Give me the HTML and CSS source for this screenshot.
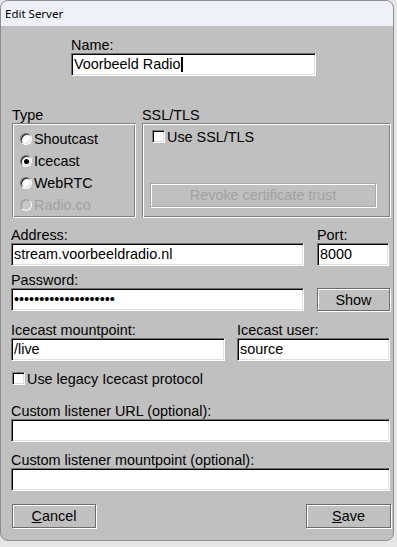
FILE: index.html
```html
<!DOCTYPE html>
<html lang="nl">
<head>
    <meta charset="UTF-8">
    <meta name="viewport" content="width=device-width, initial-scale=1.0">
    <title>Edit Server</title>
    <link rel="stylesheet" href="styles.css">
</head>
<body>
    <div class="window">
        <div class="titlebar">Edit Server</div>

        <div class="content">
            <div class="name-block">
                <div class="label">Name:</div>
                <div class="field">Voorbeeld Radio<span class="caret"></span></div>
            </div>

            <div class="groups">
                <div class="type-col">
                    <div class="label">Type</div>
                    <div class="groupbox type-box">
                        <div class="option"><span class="radio"></span>Shoutcast</div>
                        <div class="option"><span class="radio checked"></span>Icecast</div>
                        <div class="option"><span class="radio"></span>WebRTC</div>
                        <div class="option disabled"><span class="radio"></span>Radio.co</div>
                    </div>
                </div>
                <div class="ssl-col">
                    <div class="label">SSL/TLS</div>
                    <div class="groupbox ssl-box">
                        <div class="option check"><span class="checkbox"></span>Use SSL/TLS</div>
                        <div class="button disabled revoke">Revoke certificate trust</div>
                    </div>
                </div>
            </div>

            <div class="row address-row">
                <div>
                    <div class="label">Address:</div>
                    <div class="field">stream.voorbeeldradio.nl</div>
                </div>
                <div>
                    <div class="label">Port:</div>
                    <div class="field">8000</div>
                </div>
            </div>

            <div class="row password-row">
                <div>
                    <div class="label">Password:</div>
                    <div class="field">••••••••••••••••••••</div>
                </div>
                <div class="button show">Show</div>
            </div>

            <div class="row icecast-row">
                <div>
                    <div class="label">Icecast mountpoint:</div>
                    <div class="field">/live</div>
                </div>
                <div>
                    <div class="label">Icecast user:</div>
                    <div class="field">source</div>
                </div>
            </div>

            <div class="option check legacy"><span class="checkbox"></span>Use legacy Icecast protocol</div>

            <div class="row single url-row">
                <div class="label">Custom listener URL (optional):</div>
                <div class="field"></div>
            </div>

            <div class="row single mount-row">
                <div class="label">Custom listener mountpoint (optional):</div>
                <div class="field"></div>
            </div>

            <div class="footer">
                <div class="button cancel"><span><u>C</u>ancel</span></div>
                <div class="button save"><span><u>S</u>ave</span></div>
            </div>
        </div>
    </div>
</body>
</html>
```

FILE: styles.css
```css
body {
    margin: 0;
    background-color: #e6e6e6;
    font-family: "Liberation Sans", Arial, sans-serif;
    font-size: 14.4px;
    color: #000;
}
.window {
    width: 394px;
    height: 541px;
    box-sizing: border-box;
    border: 1px solid #8e8e8e;
    border-radius: 8px;
    overflow: hidden;
    background-color: #c0c0c0;
}
.titlebar {
    height: 25px;
    line-height: 25px;
    padding-left: 4px;
    background-color: #eef1fa;
    font-family: "Noto Sans", sans-serif;
    font-size: 11.5px;
}
.content {
    padding: 11px 3px 0 10px;
}
.label {
    height: 16px;
    line-height: 16px;
    white-space: nowrap;
}
.field {
    height: 23px;
    line-height: 21px;
    box-sizing: border-box;
    padding-left: 2px;
    background-color: #fff;
    border: 1px solid;
    border-color: #707070 #fff #fff #707070;
    box-shadow: inset 1px 1px 0 #000, inset -1px -1px 0 #e0e0e0;
    white-space: nowrap;
    overflow: hidden;
}
.caret {
    display: inline-block;
    width: 2px;
    height: 15px;
    margin-left: 1px;
    vertical-align: -3px;
    background-color: #000;
}
.name-block {
    width: 245px;
    margin-left: 60px;
}

/* group boxes */
.groups {
    display: flex;
    margin-top: 31px;
}
.type-col {
    width: 124px;
    margin-left: 1px;
}
.ssl-col {
    flex: 1;
    margin-left: 6px;
    margin-right: -1px;
}
.groupbox {
    height: 95px;
    box-sizing: border-box;
    border: 1px solid;
    border-color: #808080 #fff #fff #808080;
    box-shadow: inset 1px 1px 0 #fff, inset -1px -1px 0 #808080;
}
.type-box {
    padding: 4px 0 0 7px;
}
.ssl-box {
    padding: 4px 0 0 8px;
}
.option {
    display: flex;
    align-items: center;
    gap: 2px;
    height: 22px;
    white-space: nowrap;
}
.option.disabled {
    color: #a0a0a0;
}
.option.check {
    height: 17px;
}
.radio {
    position: relative;
    width: 12px;
    height: 12px;
    box-sizing: border-box;
    border-radius: 50%;
    background-color: #fff;
    border: 1px solid;
    border-color: #707070 #fff #fff #707070;
    box-shadow: inset 1px 1px 0 #202020, inset -1px -1px 0 #d8d8d8;
}
.radio.checked::after {
    content: "";
    position: absolute;
    left: 3px;
    top: 3px;
    width: 5px;
    height: 5px;
    border-radius: 50%;
    background-color: #000;
}
.disabled .radio {
    background-color: #c8c8c8;
    border-color: #a0a0a0 #fff #fff #a0a0a0;
    box-shadow: inset 1px 1px 0 #a8a8a8;
}
.checkbox {
    width: 13px;
    height: 13px;
    margin-left: 1px;
    box-sizing: border-box;
    background-color: #fff;
    border: 1px solid;
    border-color: #808080 #fff #fff #808080;
    box-shadow: inset 1px 1px 0 #000, inset -1px -1px 0 #dcdcdc;
}

/* buttons */
.button {
    display: flex;
    align-items: center;
    justify-content: center;
    height: 24px;
    box-sizing: border-box;
    border: 1px solid #6b6b6b;
    box-shadow: inset 1px 1px 0 #fff, 1px 1px 0 #fff;
    white-space: nowrap;
}
.button.disabled {
    color: #a0a0a0;
    border-color: #a8a8a8;
}
.revoke {
    width: 226px;
    margin-top: 38px;
    margin-left: -1px;
}
.show {
    height: 23px;
    align-self: end;
}

/* field rows */
.row {
    display: grid;
    column-gap: 12px;
}
.address-row {
    grid-template-columns: 1fr 73px;
    margin-top: 9px;
}
.password-row {
    grid-template-columns: 1fr 73px;
    margin-top: 6px;
}
.address-row .field,
.password-row .field {
    margin-right: 1px;
}
.icecast-row {
    grid-template-columns: 214px 1fr;
    margin-top: 11px;
}
.legacy {
    margin-top: 9px;
}
.single {
    display: block;
}
.url-row {
    margin-top: 16px;
}
.mount-row {
    margin-top: 10px;
}
.footer {
    display: flex;
    justify-content: space-between;
    margin-top: 13px;
}
.cancel {
    width: 84px;
    margin-left: 1px;
}
.save {
    width: 85px;
    margin-right: -1px;
}
```
